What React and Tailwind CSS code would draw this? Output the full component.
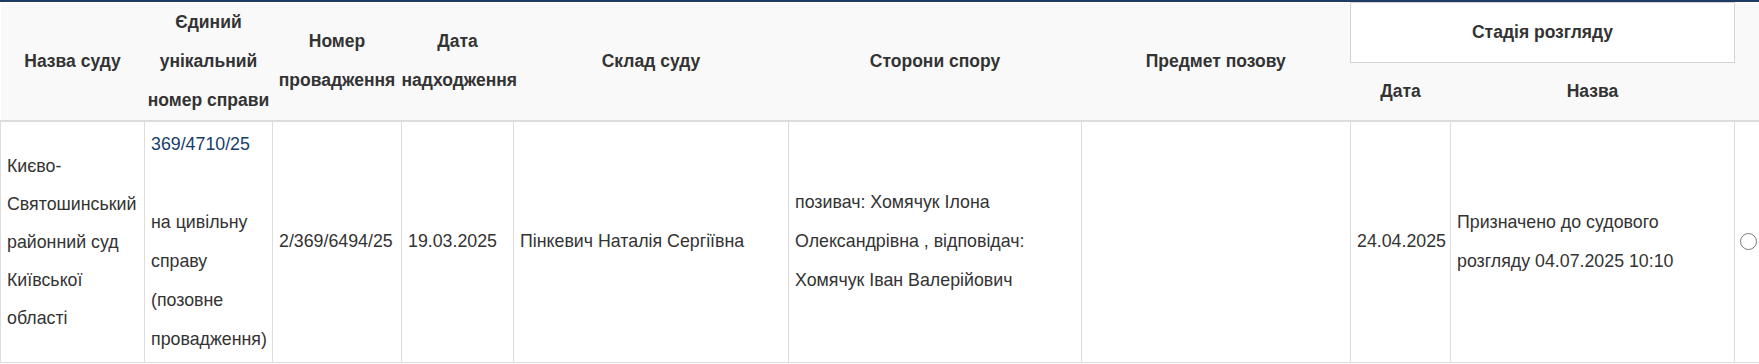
const th = "px-0 py-0 text-center align-middle font-bold text-[17.5px] whitespace-nowrap border-b-2 border-[#ddd]";
const td = "border border-[#ddd] px-[6px] py-[3px] align-middle text-left font-normal";

export default function App() {
    return (
        <div className="w-[1759px] bg-white font-['Liberation_Sans',Arial,sans-serif] text-[17.8px] leading-[39px] text-[#333]">
            <div className="h-[2px] bg-[#1d3c63]"></div>
            <table className="w-full table-fixed border-collapse">
                <colgroup>
                    <col className="w-[144px]" />
                    <col className="w-[128px]" />
                    <col className="w-[129px]" />
                    <col className="w-[112px]" />
                    <col className="w-[275px]" />
                    <col className="w-[293px]" />
                    <col className="w-[269px]" />
                    <col className="w-[100px]" />
                    <col className="w-[284px]" />
                    <col className="w-[25px]" />
                </colgroup>
                <thead className="bg-[#f9f9f9]">
                    <tr className="h-[59px]">
                        <th rowSpan={2} className={th}>Назва суду</th>
                        <th rowSpan={2} className={th}>
                            Єдиний
                            <br />
                            унікальний
                            <br />
                            номер справи
                        </th>
                        <th rowSpan={2} className={th}>
                            Номер
                            <br />
                            провадження
                        </th>
                        <th rowSpan={2} className={th}>
                            Дата
                            <br />
                            надходження
                        </th>
                        <th rowSpan={2} className={th}>Склад суду</th>
                        <th rowSpan={2} className={th}>Сторони спору</th>
                        <th rowSpan={2} className={th}>Предмет позову</th>
                        <th colSpan={2} className="border border-[#d3d3d3] bg-white py-0 text-center align-middle font-bold text-[17.5px]">
                            Стадія розгляду
                        </th>
                        <th rowSpan={2} className={th}></th>
                    </tr>
                    <tr className="h-[58px]">
                        <th className={th}>Дата</th>
                        <th className={th}>Назва</th>
                    </tr>
                </thead>
                <tbody>
                    <tr className="h-[240px]">
                        <td className={td + " leading-[38px]"}>Києво-Святошинський районний суд Київської області</td>
                        <td className={td}>
                            <a className="text-[#163e6c]">369/4710/25</a>
                            <br />
                            <br />
                            на цивільну справу (позовне провадження)
                        </td>
                        <td className={td}>2/369/6494/25</td>
                        <td className={td}>19.03.2025</td>
                        <td className={td}>Пінкевич Наталія Сергіївна</td>
                        <td className={td}>позивач: Хомячук Ілона Олександрівна , відповідач: Хомячук Іван Валерійович</td>
                        <td className={td}></td>
                        <td className={td}>24.04.2025</td>
                        <td className={td}>Призначено до судового розгляду 04.07.2025 10:10</td>
                        <td className="border border-r-0 border-[#ddd] pl-[5px] pr-0 align-middle">
                            <div className="h-[17px] w-[17px] rounded-full border border-[#7a7a7a] bg-white"></div>
                        </td>
                    </tr>
                </tbody>
            </table>
        </div>
    );
}
